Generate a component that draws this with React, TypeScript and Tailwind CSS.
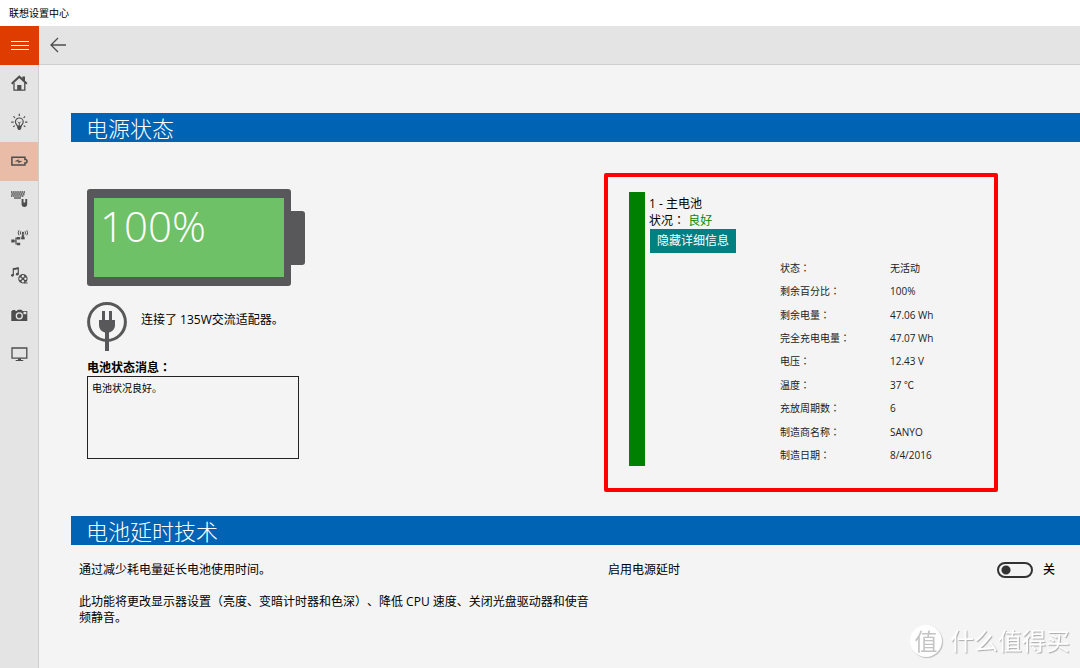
import type { ReactNode } from "react";

const details: [string, string][] = [
  ["状态", "无活动"],
  ["剩余百分比", "100%"],
  ["剩余电量", "47.06 Wh"],
  ["完全充电电量", "47.07 Wh"],
  ["电压", "12.43 V"],
  ["温度", "37 ℃"],
  ["充放周期数", "6"],
  ["制造商名称", "SANYO"],
  ["制造日期", "8/4/2016"],
];

function Colon() {
  return <span className="font-['Noto_Sans_CJK_TC',sans-serif]">：</span>;
}

function Icon({ children }: { children: ReactNode }) {
  return (
    <svg viewBox="0 0 18 18" className="size-[18px]" fill="none" stroke="#4d4d4d" aria-hidden="true">
      {children}
    </svg>
  );
}

const navItems: { label: string; icon: ReactNode }[] = [
  {
    label: "主页",
    icon: (
      <Icon>
        <path d="M1.700 9.800 9.300 2.700l7.500 7.100" strokeWidth="2" />
        <path d="M4 9v7.200h10.800V9" strokeWidth="1.300" />
        <path d="M12.300 2.500H15v5l-2.700-2.400z" fill="#4d4d4d" stroke="none" />
        <path d="M7.200 11h4.200v5.200H7.200z" fill="#4d4d4d" stroke="none" />
      </Icon>
    ),
  },
  {
    label: "灯光",
    icon: (
      <Icon>
        <path d="M9.300 5a3.900 3.900 0 0 0-3.900 3.900c0 1.700 1.400 2.600 1.900 4.100h4c.5-1.500 1.900-2.400 1.900-4.100A3.900 3.900 0 0 0 9.300 5z" strokeWidth="1.200" />
        <path d="M7.200 13h4.200v2l-1.200 2H8.400l-1.200-2z" fill="#4d4d4d" stroke="none" />
        <path d="M9.300 13V9.700M7.800 8.700l1.500 1.500 1.500-1.500" strokeWidth=".9" />
        <path d="M9.300.8v2.200M3.500 3.400 5 4.900M15.100 3.400l-1.500 1.500M1.200 9.200h2.400M15 9.200h2.400M3.300 13.800l1.500-1.200M15.300 13.800l-1.500-1.200" strokeWidth="1.200" />
      </Icon>
    ),
  },
  {
    label: "电源",
    icon: (
      <Icon>
        <path d="M1.900 5.300h13v2.100h1l1 .9v1.800l-1 .9h-1v2h-13z" strokeWidth="1.500" />
        <path d="m4.500 9.300 4.500-2-.6 1.500 4.100.3-4.500 2.300.6-1.600z" fill="#4d4d4d" stroke="none" />
      </Icon>
    ),
  },
  {
    label: "输入",
    icon: (
      <Icon>
        <path d="M1 2h14M1 6h13" strokeWidth="1.400" strokeDasharray="1.500 .6" />
        <path d="M1 4h14" strokeWidth="1.400" strokeDasharray="1.500 .6" strokeDashoffset="1" />
        <path d="M1 3h14M1 5h14" strokeWidth=".5" opacity=".6" />
        <path d="M4 8h7" strokeWidth="1.300" />
        <path d="M11.600 9h1.900v3.400h1.800V9h1.900v5.600a2.400 2.400 0 0 1-2.400 2.400H14a2.400 2.400 0 0 1-2.400-2.400z" fill="#4d4d4d" stroke="none" />
      </Icon>
    ),
  },
  {
    label: "网络",
    icon: (
      <Icon>
        <path d="M4 12h2M6 9.200h2M6 15h2M6 8.600v7" strokeWidth="1.200" />
        <path d="M1.300 10.500h3.200v3H1.300zM7 7.900h3.200v2.500H7zM7 13.800h3.200v2.500H7z" fill="#4d4d4d" stroke="none" />
        <path d="M12.800 4.500 11.300 10h3.200l-1.500-5.500z" fill="#4d4d4d" strokeWidth=".7" />
        <circle cx="12.900" cy="3.900" r="1.100" fill="#4d4d4d" stroke="none" />
        <path d="M10.800 2.300q-1 1.600 0 3.200M9 1.300q-1.700 2.500 0 5M15 2.300q1 1.600 0 3.200M16.800 1.300q1.700 2.500 0 5" strokeWidth="1" />
      </Icon>
    ),
  },
  {
    label: "音频视频",
    icon: (
      <Icon>
        <path d="M3.300 8.300V1.800l5-.9v6" strokeWidth="1.200" />
        <path d="M3.300 2.300l5-.9" strokeWidth="1.600" />
        <circle cx="2.400" cy="8.300" r="1.400" fill="#4d4d4d" stroke="none" />
        <circle cx="7.300" cy="7.200" r="1.400" fill="#4d4d4d" stroke="none" />
        <circle cx="12.900" cy="11.700" r="4.700" fill="#4d4d4d" stroke="none" />
        <g fill="#e4e4e4" stroke="none">
          <circle cx="12.900" cy="9.200" r="1.200" />
          <circle cx="12.900" cy="14.200" r="1.200" />
          <circle cx="10.400" cy="11.700" r="1.200" />
          <circle cx="15.400" cy="11.700" r="1.200" />
        </g>
        <path d="M14 16h3.600" strokeWidth="1" />
      </Icon>
    ),
  },
  {
    label: "相机",
    icon: (
      <Icon>
        <path d="M1.300 5h1V4h3v1h1.500l1-1.200h3.700l1 1.200h4.800v10h-16z" fill="#4d4d4d" stroke="none" />
        <circle cx="9.300" cy="9.800" r="3" stroke="#e4e4e4" strokeWidth="1.300" />
        <path d="M13.500 5.800h2.800v2.400h-2.800z" fill="#e4e4e4" stroke="none" />
      </Icon>
    ),
  },
  {
    label: "显示",
    icon: (
      <Icon>
        <path d="M2 3h14.800v10.200H2z" strokeWidth="1.300" />
        <path d="M8 13.200h3v1.800h2.300v1H5.700v-1H8z" fill="#4d4d4d" stroke="none" />
      </Icon>
    ),
  },
];

function Band({ children }: { children: ReactNode }) {
  return (
    <h2 className="h-[29px] bg-[#0063b4] pl-[15px] text-[22px] leading-[31px] font-light text-white">{children}</h2>
  );
}

function Battery() {
  return (
    <div className="flex items-center">
      <div className="h-[97px] w-[204px] rounded-[3px] bg-[#58585a] px-[7px] py-[9px]">
        <div className="h-full bg-[#6fc168] pl-[6px] text-[42px] leading-[56px] font-light text-white">100%</div>
      </div>
      <div className="h-[54px] w-[14px] rounded-r-[3px] bg-[#58585a]" />
    </div>
  );
}

function PlugIcon() {
  return (
    <svg viewBox="0 0 40 49" className="h-[49px] w-10" aria-hidden="true">
      <circle cx="20" cy="20" r="18.400" fill="none" stroke="#58585a" strokeWidth="3" />
      <path
        d="M15 9h3v9h4V9h3v9h3v5c0 4-2.500 6.500-6 7.500V49h-4V30.500c-3.500-1-6-3.500-6-7.500v-5h3z"
        fill="#58585a"
      />
    </svg>
  );
}

export default function App() {
  return (
    <div className="flex min-h-screen flex-col bg-[#f4f4f4] font-['Open_Sans','Noto_Sans_CJK_SC',sans-serif] text-[12px] leading-4 text-black [text-spacing-trim:space-all]">
      <header className="h-[26px] bg-white pl-[9px] text-[10px] leading-[26px]">联想设置中心</header>
      <div className="flex flex-1">
        <aside className="w-[39px] border-r border-[#cfcfcf] bg-[#e4e4e4]">
          <button aria-label="菜单" className="-mr-px flex h-[39px] w-[39px] items-center justify-center bg-[#de3c00]">
            <svg viewBox="0 0 18 11" className="h-[11px] w-[18px]" stroke="#fff" aria-hidden="true">
              <path d="M0 1.500h18M0 5.500h18M0 9.500h18" />
            </svg>
          </button>
          <nav className="grid h-[309px] grid-rows-8">
            {navItems.map((item) => (
              <a
                key={item.label}
                href="#"
                aria-label={item.label}
                className={
                  item.label === "电源"
                    ? "flex items-center justify-center bg-[#e9bca8] pb-[2px]"
                    : "flex items-center justify-center pb-[2px]"
                }
              >
                {item.icon}
              </a>
            ))}
          </nav>
        </aside>
        <div className="flex-1">
          <div className="flex h-[39px] items-center border-b border-[#cfcfcf] bg-[#e4e4e4] pl-[11px]">
            <button aria-label="返回">
              <svg viewBox="0 0 16 16" className="size-4" fill="none" stroke="#4d4d4d" strokeWidth="1.300" aria-hidden="true">
                <path d="M16 8H1M8 1 1 8l7 7" />
              </svg>
            </button>
          </div>
          <main className="pt-12 pl-8">
            <section>
              <Band>电源状态</Band>
              <div className="grid grid-cols-[525fr_476fr] pt-[31px] pb-6 pl-2">
                <div className="pt-4 pl-2">
                  <Battery />
                  <div className="mt-4 flex gap-[14px]">
                    <PlugIcon />
                    <p className="pt-[10px]">连接了 135W交流适配器。</p>
                  </div>
                  <label htmlFor="message" className="mt-2 block font-bold">
                    电池状态消息
                    <Colon />
                  </label>
                  <textarea
                    id="message"
                    readOnly
                    defaultValue="电池状况良好。"
                    className="block h-[83px] w-[212px] resize-none border border-[#222] px-1 py-[3px] text-[10px] leading-4 outline-none"
                  />
                </div>
                <div className="flex h-[319px] w-[394px] rounded-[2px] border-4 border-[#ff0000] pt-[15px] pl-[21px]">
                  <div className="h-[274px] w-4 bg-[#008000]" />
                  <div className="flex-1 pt-1 pl-1">
                    <p>1 - 主电池</p>
                    <p>
                      状况
                      <Colon /> <span className="text-[#008a00]">良好</span>
                    </p>
                    <button className="ml-px block h-6 w-[86px] bg-[#008080] text-white">隐藏详细信息</button>
                    <table className="mt-[3px] ml-[131px] h-[211px] text-left text-[10px] leading-4 text-[#222]">
                      <tbody>
                        {details.map(([name, value]) => (
                          <tr key={name}>
                            <th scope="row" className="w-[110px] p-0 font-normal">
                              {name}
                              <Colon />
                            </th>
                            <td className="p-0">{value}</td>
                          </tr>
                        ))}
                      </tbody>
                    </table>
                  </div>
                </div>
              </div>
            </section>
            <section>
              <Band>电池延时技术</Band>
              <div className="grid grid-cols-[529fr_472fr] pt-[17px] pl-2">
                <div className="space-y-4 pr-3">
                  <p>通过减少耗电量延长电池使用时间。</p>
                  <p>此功能将更改显示器设置（亮度、变暗计时器和色深）、降低 CPU 速度、关闭光盘驱动器和使音频静音。</p>
                </div>
                <div className="flex items-start justify-between pr-[25px]">
                  <label htmlFor="extend">启用电源延时</label>
                  <div className="flex items-center gap-[10px]">
                    <input
                      id="extend"
                      type="checkbox"
                      role="switch"
                      className="h-4 w-9 appearance-none rounded-full border-2 border-[#333] bg-[radial-gradient(circle_at_7px_6px,#333_4px,transparent_5px)]"
                    />
                    <span className="font-medium">关</span>
                  </div>
                </div>
              </div>
            </section>
          </main>
        </div>
      </div>
      <div className="fixed right-[10px] bottom-[11px] flex items-center gap-2">
        <span className="flex size-8 items-center justify-center rounded-full bg-white text-[23px] leading-8 text-[#c4c4c4] shadow-[1px_1px_1px_#bbb]">
          值
        </span>
        <span className="text-[24px] leading-8 text-white [text-shadow:1px_1px_1px_#aaa]">什么值得买</span>
      </div>
    </div>
  );
}
